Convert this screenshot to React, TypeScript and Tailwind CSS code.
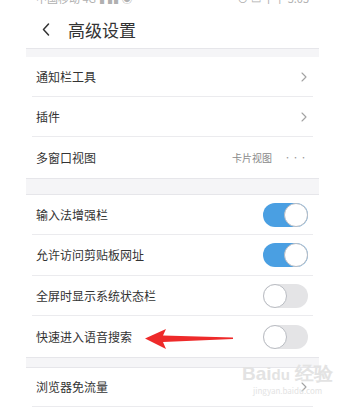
import React from "react";

function Chevron() {
  return (
    <svg width="6" height="10" viewBox="0 0 6 10" fill="none" className="mr-[1px] shrink-0">
      <path d="M1 1l4 4-4 4" stroke="#a3a3a3" strokeWidth="1.1" strokeLinecap="round" strokeLinejoin="round" />
    </svg>
  );
}

function Toggle({ on }: { on: boolean }) {
  return (
    <div
      className={
        on
          ? "flex h-[24px] w-[45px] items-center justify-end rounded-full bg-[#4a9fe2]"
          : "flex h-[24px] w-[45px] items-center justify-start rounded-full bg-[#e4e4e6]"
      }
    >
      <div className="h-[24px] w-[24px] rounded-full border border-[#b9bcc2] bg-white" />
    </div>
  );
}

function Row({ label, right, h, last }: { label: string; right: React.ReactNode; h: string; last?: boolean }) {
  return (
    <div className={`flex flex-col ${h}`}>
      <div className="flex flex-1 items-center justify-between pl-[10px] pr-[11px]">
        <span className="text-[12px] text-[#333]">{label}</span>
        {right}
      </div>
      {!last && <div className="mx-[6px] h-px bg-[#ebebee]" />}
    </div>
  );
}

export default function App() {
  return (
    <div
      className="relative h-[409px] w-[358px] overflow-hidden bg-white"
      style={{ fontFamily: '"Noto Sans CJK SC", "Noto Sans", sans-serif' }}
    >
      <div className="ml-[26px] w-[293px]">
        {/* status bar remnant */}
        <div className="h-[4px] overflow-hidden">
          <div className="-mt-[8px] flex justify-between px-[10px] text-[11px] leading-[12px] text-[#b0b0b0]">
            <span>中国移动 4G ▮ ▮▮ ◉</span>
            <span>⊙ ▭ 下午 5:05</span>
          </div>
        </div>

        {/* header */}
        <div className="flex h-[44px] items-center pt-[6px]">
          <svg width="8" height="13" viewBox="0 0 8 13" fill="none" className="ml-[16px]">
            <path d="M6.5 1L1.5 6.5l5 5.5" stroke="#333" strokeWidth="1.5" strokeLinecap="round" strokeLinejoin="round" />
          </svg>
          <span className="ml-[18px] text-[17px] leading-none text-[#333]">高级设置</span>
        </div>

        <div className="h-[9px] border-t border-[#e6e6ea] bg-[#f5f5f7]" />

        <Row label="通知栏工具" right={<Chevron />} h="h-[40px]" />
        <Row label="插件" right={<Chevron />} h="h-[40px]" />
        <Row
          label="多窗口视图"
          h="h-[41px]"
          last
          right={
            <div className="flex items-center gap-[12px]">
              <span className="text-[10px] text-[#8a8a8a]">卡片视图</span>
              <span className="text-[7px] tracking-[1px] text-[#9a9a9a]">•••</span>
            </div>
          }
        />

        <div className="h-[17px] border-y border-[#e6e6ea] bg-[#f5f5f7]" />

        <Row label="输入法增强栏" right={<Toggle on />} h="h-[40px]" />
        <Row label="允许访问剪贴板网址" right={<Toggle on />} h="h-[41px]" />
        <Row label="全屏时显示系统状态栏" right={<Toggle on={false} />} h="h-[40px]" />
        <Row label="快速进入语音搜索" right={<Toggle on={false} />} h="h-[41px]" last />

        <div className="h-[11px] border-y border-[#e6e6ea] bg-[#f5f5f7]" />

        <Row label="浏览器免流量" right={<Chevron />} h="h-[39px]" />
      </div>

      {/* red annotation arrow */}
      <svg className="absolute left-[143px] top-[327px]" width="92" height="24" viewBox="0 0 92 24">
        <path d="M2 11.5L23 2 20 8.5 90 10.5 90 12 20 15 23 22Z" fill="#ee2a2a" />
      </svg>

      {/* watermark */}
      <div className="absolute left-[242px] top-[364px] flex flex-col items-center text-[#e3e3e3]">
        <span className="text-[19px] font-bold leading-none" style={{ fontFamily: '"Liberation Sans", sans-serif' }}>
          Bai<span className="text-[15px]">du</span> 经验
        </span>
        <span className="mt-[4px] text-[8px] leading-none">jingyan.baidu.com</span>
      </div>
    </div>
  );
}
